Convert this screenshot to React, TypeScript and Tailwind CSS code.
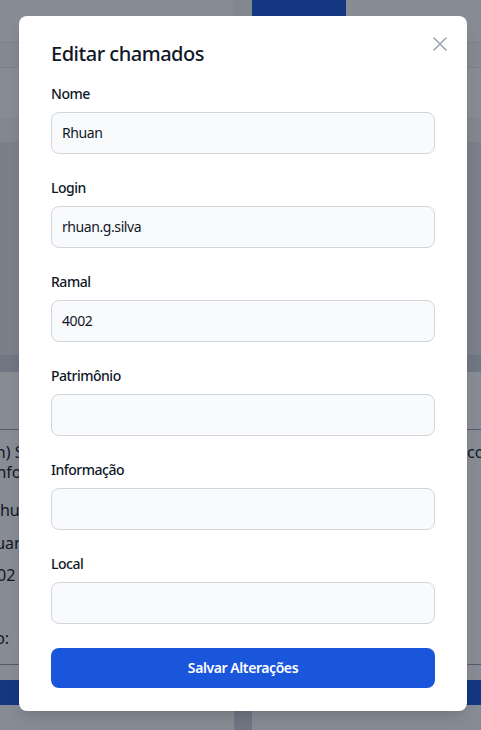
import React from "react"

type Field = { label: string; value: string }

const fields: Field[] = [
  { label: "Nome", value: "Rhuan" },
  { label: "Login", value: "rhuan.g.silva" },
  { label: "Ramal", value: "4002" },
  { label: "Patrimônio", value: "" },
  { label: "Informação", value: "" },
  { label: "Local", value: "" },
]

function BackgroundPage() {
  return (
    <div className="flex flex-col text-gray-900">
      <div className="flex h-[43px] border-b border-gray-200">
        <div className="w-[234px]" />
        <div className="w-[18px] bg-gray-100" />
        <div className="flex-1">
          <div className="flex h-[36px] w-[94px] items-end justify-center bg-[#1a56db] pb-1 text-sm font-medium text-white">
            Relatório
          </div>
        </div>
      </div>
      <div className="h-[25px] border-b border-gray-200 bg-gray-50" />
      <div className="h-[50px]" />
      <div className="h-[24px] bg-gray-100" />
      <div className="h-[213px] bg-gray-200" />
      <div className="h-[17px] bg-gray-300" />
      <div className="h-[58px] border-b border-gray-400" />
      <div className="flex h-[235px] justify-between border-b border-gray-400 text-base">
        <div className="-ml-[9px] flex flex-col pt-[12px] leading-[20px]">
          <span>(n) Solicitante</span>
          <span>Info</span>
          <span className="mt-[18px] -ml-[1px]">Rhuan</span>
          <span className="mt-[13px]">{"\u00A0"}uan</span>
          <span className="mt-[12px] ml-[6px]">02</span>
          <span className="mt-[43px]">{"\u00A0"}o:</span>
        </div>
        <div className="w-[14px] overflow-hidden whitespace-nowrap pt-[12px] leading-[20px]">co</div>
      </div>
      <div className="h-[15px]" />
      <div className="h-[25px] bg-[#1a56db]" />
      <div className="flex h-[40px] bg-gray-300">
        <div className="w-[234px] rounded-br-lg bg-white" />
        <div className="w-[18px]" />
        <div className="flex-1 rounded-bl-lg bg-white" />
      </div>
    </div>
  )
}

function EditModal() {
  return (
    <div className="ml-[19px] mt-[16px] w-[448px] rounded-lg bg-white px-8 pt-6 pb-[23px] tracking-[-0.03em] shadow-lg">
      <div className="relative">
        <h2 className="mb-4 text-xl font-medium leading-7 text-gray-900">Editar chamados</h2>
        <button className="absolute -right-[12px] -top-[3px] text-gray-400">
          <svg width="14" height="14" viewBox="0 0 14 14" fill="none">
            <path d="M1 1L13 13M13 1L1 13" stroke="currentColor" strokeWidth="1.5" strokeLinecap="round" />
          </svg>
        </button>
      </div>
      <form className="flex flex-col gap-6">
        {fields.map((f) => (
          <div key={f.label}>
            <label className="mb-2 block text-sm font-medium leading-5 text-gray-900">{f.label}</label>
            <input
              readOnly
              value={f.value}
              className="block w-full rounded-lg border border-gray-300 bg-gray-50 p-2.5 text-sm leading-5 tracking-[-0.03em] text-gray-900 outline-none"
            />
          </div>
        ))}
        <button
          type="button"
          className="h-10 w-full rounded-lg bg-[#1a56db] text-sm font-semibold tracking-[-0.03em] text-white"
        >
          Salvar Alterações
        </button>
      </form>
    </div>
  )
}

export default function App() {
  return (
    <div className="relative h-[730px] w-[481px] overflow-hidden bg-white font-['Noto_Sans',sans-serif]">
      <BackgroundPage />
      <div className="absolute inset-0 bg-gray-900/50" />
      <div className="absolute inset-0">
        <EditModal />
      </div>
    </div>
  )
}
